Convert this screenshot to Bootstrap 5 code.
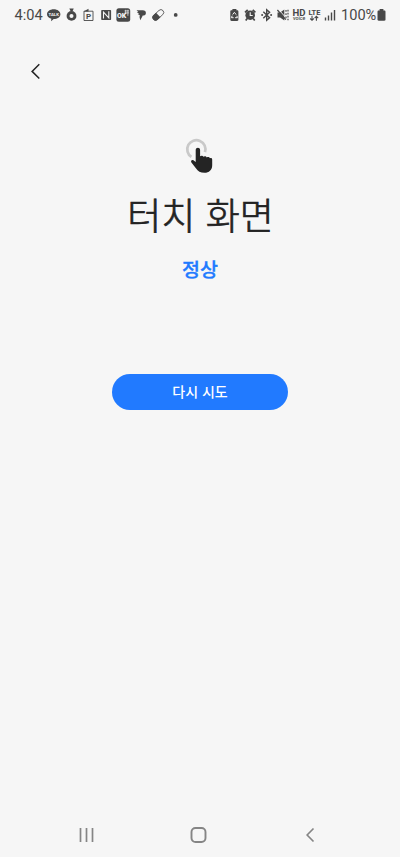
<!DOCTYPE html>
<html lang="ko">
<head>
<meta charset="utf-8">
<meta name="viewport" content="width=device-width, initial-scale=1">
<title>터치 화면</title>
<link rel="stylesheet" href="https://cdn.jsdelivr.net/npm/bootstrap@5.3.0/dist/css/bootstrap.min.css">
<style>
body{background:#f6f6f6;color:#222;font-family:"Noto Sans CJK KR",sans-serif;height:100vh;overflow:hidden}
.status{height:30px;padding:0 14px;color:#484848;font-family:Roboto,sans-serif;font-size:14.6px;line-height:30px}
.status svg{flex:none;height:18px;fill:currentColor;overflow:visible}
.clock{width:31px;padding-left:.5px;white-space:nowrap}
.level{width:39px;padding-left:3px;white-space:nowrap}
.li{width:17.5px}.ri{width:16px}
.topbar{height:83px;padding:33px 0 0 29px}
.plain{background:none;border:0;padding:0;line-height:0}
.topbar .plain{display:block}
.touch{width:32px;height:40px;margin-top:22px}
.heading{font-size:37px;font-weight:300;line-height:56px;margin:11px 0 0;padding-left:1px;-webkit-text-stroke:.7px #222}
.result{font-size:19.5px;font-weight:500;line-height:28px;color:#217aff;margin:13px 0 0;-webkit-text-stroke:.35px #217aff}
.retry{width:176px;height:35.5px;margin-top:91px;background:#217aff;color:#fff;font-size:14px;font-weight:500;line-height:35.5px;padding:0;border:0}
.retry:hover{background:#1469ea;color:#fff}
.sysnav{height:44px;padding:0 77px 0 78px}
.home{margin-left:-3px}
</style>
<script src="https://cdn.jsdelivr.net/npm/bootstrap@5.3.0/dist/js/bootstrap.bundle.min.js"></script>
</head>
<body class="d-flex flex-column">
<header class="status d-flex align-items-center">
  <span class="clock">4:04</span>
  <svg class="li" viewBox="0 0 17.5 18"><path d="M8.700 3.200c3.800 0 6.700 2.200 6.700 5s-2.900 4.900-6.700 4.900l-2.600 2.200.2-2.600C3.700 12 2 10.300 2 8.200c0-2.800 2.900-5 6.700-5z"/><text x="8.700" y="9.900" font-size="4.300" font-weight="700" text-anchor="middle" fill="#f6f6f6">TALK</text></svg>
  <svg class="li" viewBox="0 0 17.5 18"><path d="M6.300 2.600h4.400L9.600 5.200h-2z"/><circle cx="8.500" cy="9.900" r="4.900"/><circle cx="8.500" cy="9.900" r="2" fill="#f6f6f6"/></svg>
  <svg class="li" viewBox="0 0 17.5 18"><path d="M4 5.200h9v9.300H4z" fill="none" stroke="currentColor" stroke-width=".9"/><path d="M3.500 5.400 8.500 2.800v2.600z"/><text x="8.600" y="12.900" font-size="8" font-weight="700" text-anchor="middle">P</text></svg>
  <svg class="li" viewBox="0 0 17.5 18"><rect x="3.200" y="4" width="9.900" height="10" rx=".8"/><path d="M5.500 12.600V6.200l5.300 5.600V5.200" fill="none" stroke="#f6f6f6" stroke-width="1.100"/></svg>
  <svg class="li" viewBox="0 0 17.5 18"><rect x="1.400" y="2.300" width="13.800" height="13.400" rx="2.500"/><text x="6.700" y="11.900" font-size="7" font-weight="900" text-anchor="middle" fill="#f6f6f6">OK</text><path d="M9.500 4.900h4.600M9.500 6.900h4.600M10.700 3.800v4M12.900 3.800v6" fill="none" stroke="#f6f6f6" stroke-width=".7"/></svg>
  <svg class="li" viewBox="0 0 17.5 18"><path d="M3.500 4.200h6.300c2 0 3.100 1 3.100 2.700 0 1.700-1.300 2.700-3.200 2.700l-.4 1-2 3.700-.8-3.300.3-1.700-2.200-1.300 1.600-.2L3.800 6.200l1.500-.2z"/></svg>
  <svg class="li" viewBox="0 0 17.5 18"><g transform="rotate(-43 8.200 9)"><rect x="1.700" y="6.200" width="13" height="5.600" rx="2.800" fill="none" stroke="currentColor" stroke-width=".8"/><path d="M8.200 5.800H4.700a3.200 3.200 0 0 0 0 6.400h3.500z"/></g></svg>
  <svg class="li" viewBox="0 0 17.5 18"><circle cx="7.700" cy="8.900" r="1.900"/></svg>

  <svg class="ri ms-auto" viewBox="0 0 16 18"><path d="M6.400 3h4v1.300h.8c.7 0 1.200.5 1.200 1.200v8.200c0 .7-.5 1.200-1.200 1.200H5.500c-.7 0-1.200-.5-1.200-1.200V5.500c0-.7.500-1.200 1.200-1.200h.9z"/><path d="m6.700 8.500 1.700-2.200 1.700 2.300M10.900 9.800l.5 1.900H9.100M7.600 11.700H5.400l.8-2" fill="none" stroke="#f6f6f6"/></svg>
  <svg class="ri" viewBox="0 0 16 18"><circle cx="8.200" cy="9.200" r="4.800"/><path d="m3 6.400 2.700-2.500M13.400 6.400l-2.700-2.500M5.200 12.500l-1.500 2M11.200 12.500l1.500 2" stroke="currentColor" stroke-width="1.700"/><path d="M8.200 6.300v3.200h2.500" fill="none" stroke="#f6f6f6" stroke-width="1.100"/></svg>
  <svg class="ri" viewBox="0 0 16 18"><path d="m5.300 5.800 6.300 6-2.900 2.500V3.700l2.900 2.500-6.300 6" fill="none" stroke="currentColor" stroke-width="1.400"/><circle cx="4.100" cy="9" r="1"/><circle cx="13.100" cy="9" r="1"/></svg>
  <svg class="ri" viewBox="0 0 16 18"><path d="M3.500 6.500h2.600l4.200-3v11l-4.200-3H3.500z"/><path d="m4.300 3.300 7.700 8.500" stroke="#f6f6f6" stroke-width="1"/><path d="m3.400 4 8.400 9.600" stroke="currentColor" stroke-width="1.300"/><path d="M12 4v1.800M12 7.200V9M12 10.400v1.800M14 3.800v1.600M14 6.800v1.600M14 9.800v1.600M14 12.800v1.400" stroke="currentColor" stroke-width="1.200"/></svg>
  <svg class="ri" viewBox="0 0 16 18"><text x="2.600" y="9.600" font-size="8.300" font-weight="700" textLength="13" lengthAdjust="spacingAndGlyphs">HD</text><text x="3" y="14" font-size="4.500" font-weight="500" textLength="12.300" lengthAdjust="spacingAndGlyphs">voice</text></svg>
  <svg class="ri" viewBox="0 0 16 18"><text x="2.400" y="8.700" font-size="7.500" font-weight="700" textLength="12" lengthAdjust="spacingAndGlyphs">LTE</text><path d="M6 9.800v4.500m-1.800-1.800L6 14.300l1.800-1.800M10.400 14.800v-4.500m-1.800 1.800 1.800-1.800 1.800 1.800" fill="none" stroke="currentColor" stroke-width="1.100"/></svg>
  <svg class="ri" viewBox="0 0 16 18"><path d="M3.500 14.500v-3M6.500 14.500v-5M9.500 14.500V6.600M12.500 14.500V4" stroke="currentColor" stroke-width="1.400"/></svg>
  <span class="level">100%</span>
  <svg width="9" viewBox="0 0 9 18"><path d="M2.600 3h3.800v1.500h.9c.8 0 1.200.5 1.200 1.200v7.900c0 .8-.5 1.200-1.200 1.200H1.700c-.8 0-1.200-.5-1.200-1.200V5.700c0-.8.500-1.200 1.200-1.200h.9z"/></svg>
</header>

<div class="topbar">
  <button class="plain" aria-label="뒤로"><svg width="13" height="17" viewBox="0 0 13 17"><path d="M10.300 1.300 3.100 8.400l7.200 7.100" fill="none" stroke="#242424" stroke-width="1.500"/></svg></button>
</div>

<main class="d-flex flex-column align-items-center flex-grow-1 text-center">
  <svg class="touch" viewBox="184 135 32 40"><path d="M191.400 156.900A9.100 9.100 0 1 1 205 152.100" fill="none" stroke="#c9c9c9" stroke-width="2.700"/><path d="M195.700 150c0-2.900 4.400-2.900 4.400 0v6.300c.8-.9 2.800-.8 3.300.5.900-.9 2.900-.6 3.400.6 1-.8 2.700-.4 3.200.8 1.200-.6 2.200 0 2.200 1.500v5.500c0 4.600-3.300 7.600-7.600 7.600-4.400 0-6.600-1.500-8.700-4.600l-4.500-5.800c-1-1.400.4-3.100 2.300-2l2 1.600z" fill="#242424"/></svg>
  <h1 class="heading">터치 화면</h1>
  <p class="result">정상</p>
  <button class="btn retry rounded-pill">다시 시도</button>
</main>

<nav class="sysnav d-flex justify-content-between align-items-center" aria-label="시스템">
  <button class="plain" aria-label="최근"><svg width="17" height="18" viewBox="0 0 17 18"><path d="M2.500 2v14M8.500 2v14M14.500 2v14" stroke="#858585" stroke-width="1.700"/></svg></button>
  <button class="plain home" aria-label="홈"><svg width="18" height="18" viewBox="0 0 18 18"><rect x="1.500" y="2" width="14" height="14" rx="4" fill="none" stroke="#858585" stroke-width="1.900"/></svg></button>
  <button class="plain" aria-label="뒤로"><svg width="17" height="18" viewBox="0 0 17 18"><path d="M7.500 2.500 1.100 9l6.400 6.500" fill="none" stroke="#858585" stroke-width="1.700"/></svg></button>
</nav>
</body>
</html>
